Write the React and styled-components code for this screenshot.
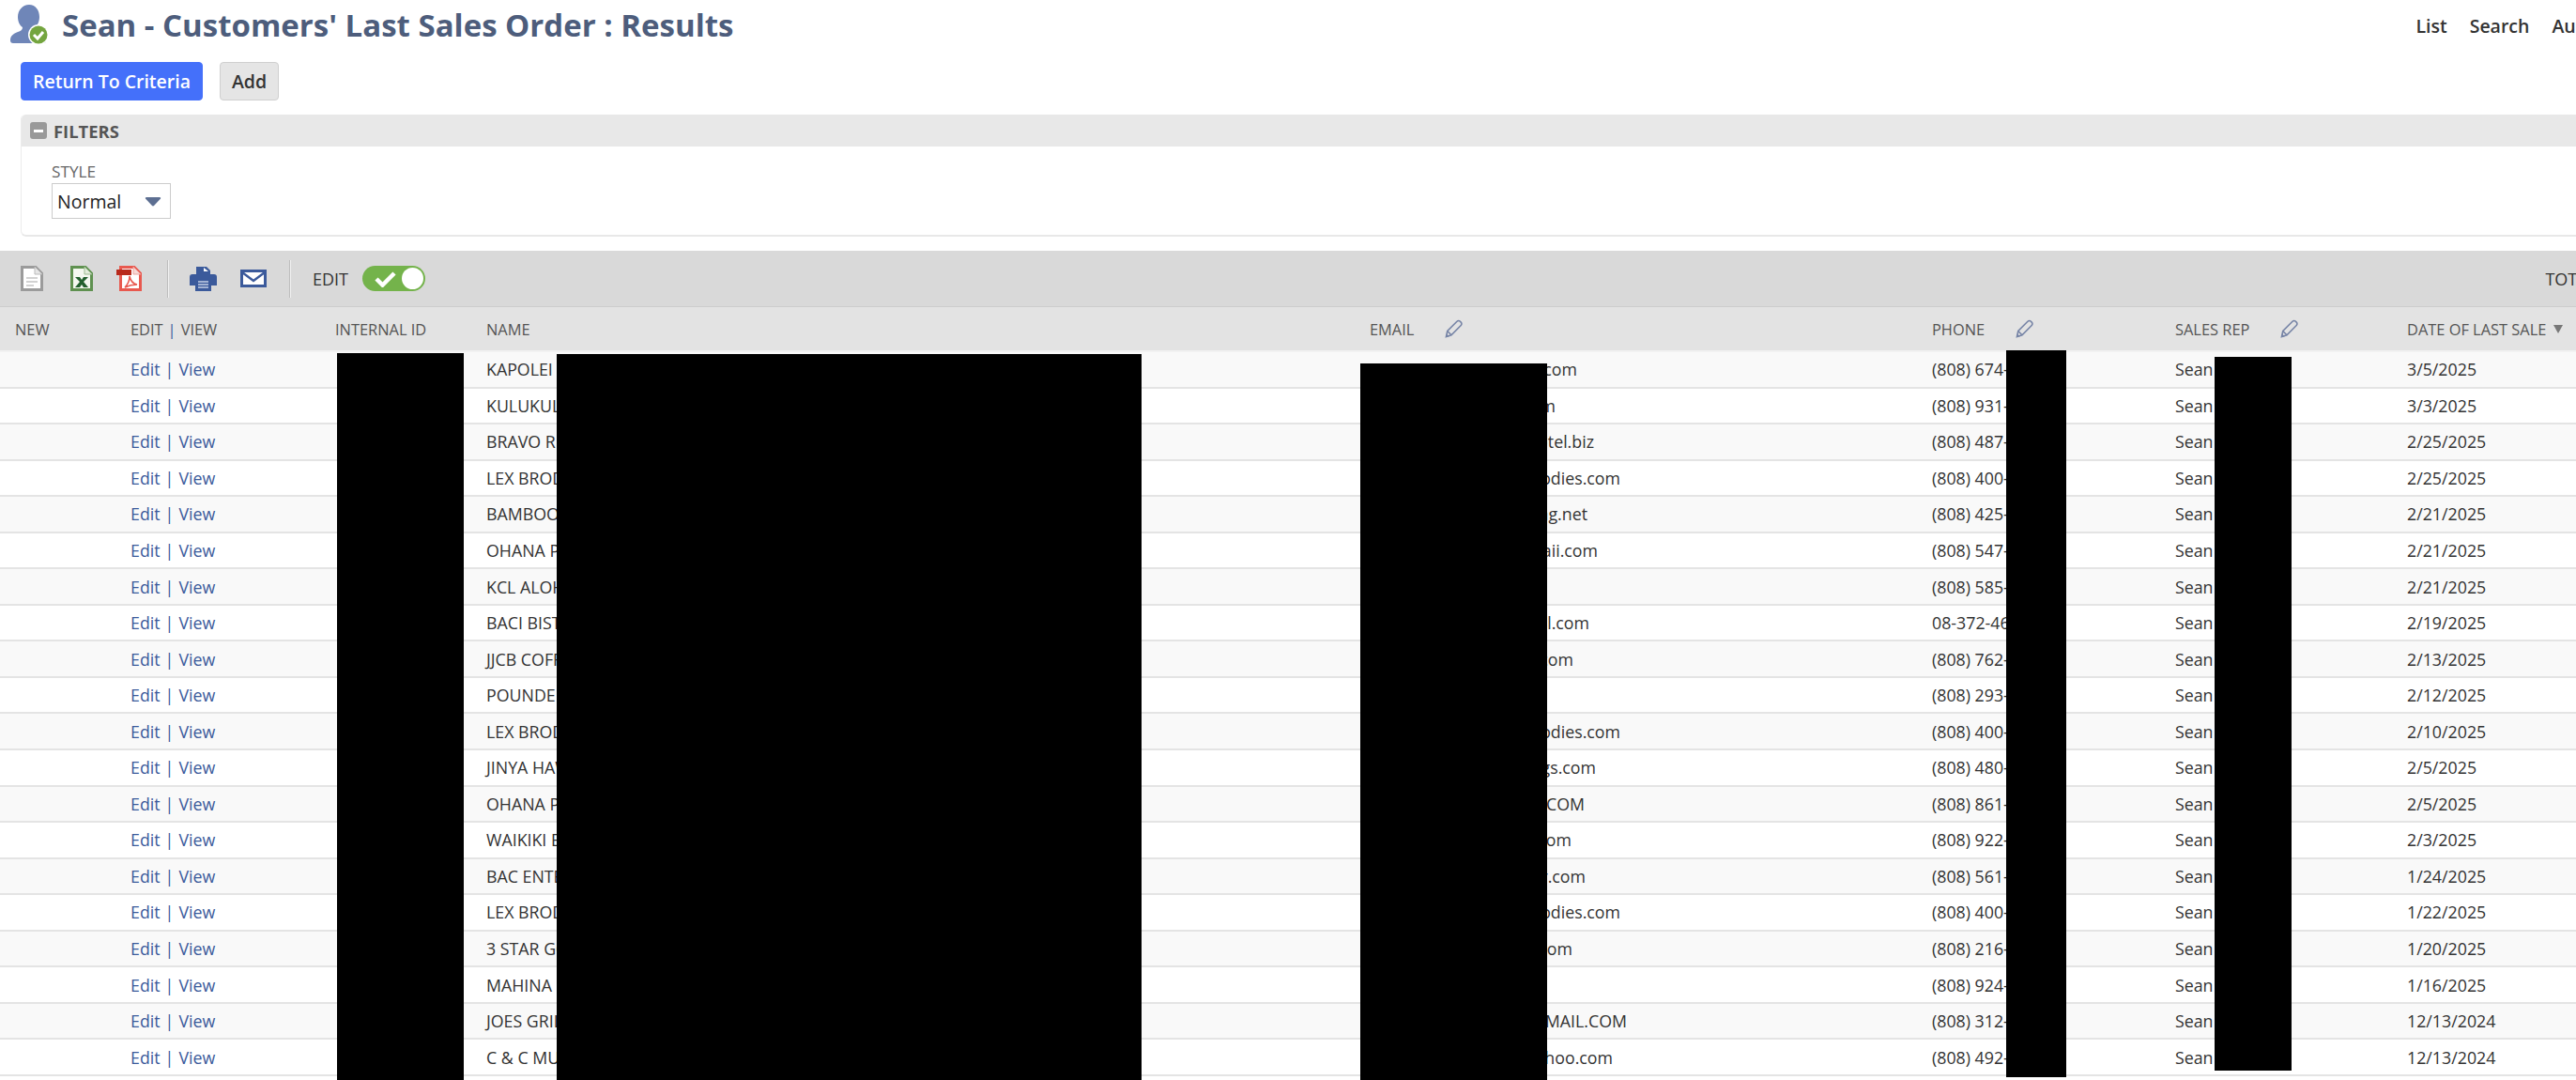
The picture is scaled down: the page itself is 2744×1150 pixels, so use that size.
import React from 'react';
import styled, { createGlobalStyle } from 'styled-components';

const GlobalStyle = createGlobalStyle`
  html, body {
    margin: 0;
    padding: 0;
    background: #fff;
    overflow: hidden;
  }
  body {
    font-family: "Open Sans", "Liberation Sans", sans-serif;
    color: #333;
  }
`;

const Page = styled('div')`
  position: relative;
  width: 2800px;
  height: 1150px;
  overflow: hidden;
`;

const TitleBar = styled('div')`
  display: flex;
  align-items: center;
  justify-content: space-between;
  height: 58px;
  padding: 0 31px 6px 10px;
  box-sizing: border-box;
`;

const TitleWrap = styled('div')`
  display: flex;
  align-items: center;
  gap: 12px;
`;

const Title = styled('h1')`
  margin: 0;
  font-size: 33px;
  font-weight: 700;
  color: #4d5d7c;
`;

const Nav = styled('div')`
  display: flex;
  gap: 24px;
  padding-top: 3px;
  font-size: 19.5px;
  font-weight: 600;
  color: #333;
`;

const ButtonRow = styled('div')`
  display: flex;
  gap: 18px;
  padding: 8px 0 15px 22px;
`;

const Button = styled('button')`
  height: 41px;
  padding: 0 12px;
  border-radius: 4px;
  border: 1px solid ${(p) => (p.$primary ? '#4470fa' : '#cfcfcf')};
  background: ${(p) => (p.$primary ? '#4470fa' : '#e5e5e5')};
  color: ${(p) => (p.$primary ? '#fff' : '#333')};
  font-family: inherit;
  font-size: 19.5px;
  font-weight: 600;
`;

const FilterPanel = styled('div')`
  margin-left: 22px;
  height: 130px;
  box-sizing: border-box;
  border-left: 1px solid #ececec;
  border-bottom: 2px solid #e8e8e8;
  border-radius: 5px 0 0 6px;
`;

const FilterHead = styled('div')`
  display: flex;
  align-items: center;
  gap: 7px;
  height: 34px;
  padding-left: 9px;
  background: #e8e8e8;
  border-radius: 5px 0 0 0;
  font-size: 18.4px;
  font-weight: 700;
  color: #555;
`;

const Collapse = styled('span')`
  display: flex;
  align-items: center;
  justify-content: center;
  width: 18px;
  height: 18px;
  border-radius: 3px;
  background: #999;
  &::after {
    content: '';
    width: 10px;
    height: 3px;
    background: #fff;
  }
`;

const FilterBody = styled('div')`
  padding: 17px 0 0 32px;
`;

const FieldLabel = styled('div')`
  font-size: 17.2px;
  line-height: 20px;
  color: #666;
`;

const SelectBox = styled('div')`
  display: flex;
  align-items: center;
  justify-content: space-between;
  box-sizing: border-box;
  width: 127px;
  height: 38px;
  margin-top: 2px;
  padding: 0 9px 0 5px;
  border: 1px solid #ccc;
  font-size: 19.5px;
  color: #222;
`;

const Toolbar = styled('div')`
  display: flex;
  align-items: center;
  box-sizing: border-box;
  height: 60px;
  margin-top: 15px;
  padding: 0 0 0 22px;
  background: #d9d9d9;
  border-bottom: 1px solid #cdcdcd;
`;

const Tool = styled('span')`
  display: flex;
  margin-right: ${(p) => p.$after}px;
`;

const ToolSep = styled('span')`
  box-sizing: border-box;
  width: 2px;
  height: 40px;
  margin-right: 22px;
  background: #f1f1f1;
  border-left: 1px solid #bdbdbd;
`;

const EditLabel = styled('span')`
  margin: 0 15px 0 1px;
  font-size: 18px;
  color: #333;
`;

const Toggle = styled('span')`
  display: flex;
  align-items: center;
  justify-content: space-between;
  box-sizing: border-box;
  width: 67px;
  height: 27px;
  padding: 0 2px 0 13px;
  border-radius: 14px;
  background: #74b34b;
`;

const Knob = styled('span')`
  width: 23px;
  height: 23px;
  border-radius: 50%;
  background: #fff;
`;

const Total = styled('span')`
  margin-left: auto;
  margin-right: 4px;
  font-size: 18px;
  color: #333;
`;

const COLUMNS = '123px 218px 161px 941px 599px 259px 247px 1fr';

const HeadRow = styled('div')`
  display: grid;
  grid-template-columns: ${COLUMNS};
  align-items: center;
  box-sizing: border-box;
  height: 48px;
  padding-left: 16px;
  background: #e3e3e3;
  border-bottom: 2px solid #f2f2f2;
  font-size: 16.4px;
  color: #555;
`;

const HeadCell = styled('div')`
  display: flex;
  align-items: center;
  gap: ${(p) => p.$gap || 0}px;
`;

const Bar = styled('span')`
  color: #3b5a9b;
  margin: 0 5px;
`;

const SortMark = styled('span')`
  width: 0;
  height: 0;
  margin-left: 8px;
  border-left: 5px solid transparent;
  border-right: 5px solid transparent;
  border-top: 9px solid #777;
`;

const Row = styled('div')`
  display: grid;
  grid-template-columns: ${COLUMNS};
  align-items: center;
  box-sizing: border-box;
  height: 38.55px;
  padding-left: 16px;
  background: ${(p) => (p.$odd ? '#f9f9f9' : '#fff')};
  border-bottom: 2px solid #e4e4e4;
  font-size: 17.8px;
  color: #333;
  white-space: nowrap;
  &:last-of-type {
    border-bottom: 0;
  }
`;

const Links = styled('div')`
  color: #3b5a9b;
`;

const EmailTail = styled('div')`
  width: ${(p) => p.$end - 1459}px;
  text-align: right;
`;

const Redaction = styled('div')`
  position: absolute;
  left: ${(p) => p.$x}px;
  top: ${(p) => p.$y}px;
  width: ${(p) => p.$w}px;
  height: ${(p) => p.$h}px;
  background: #000;
`;

const rows = [
  ['KAPOLEI', '.com', 1680, '(808) 674-', '3/5/2025'],
  ['KULUKUL', 'm', 1657, '(808) 931-', '3/3/2025'],
  ['BRAVO R', 'otel.biz', 1698, '(808) 487-', '2/25/2025'],
  ['LEX BROD', 'bodies.com', 1726, '(808) 400-', '2/25/2025'],
  ['BAMBOO', 'ng.net', 1691, '(808) 425-', '2/21/2025'],
  ['OHANA P', 'waii.com', 1702, '(808) 547-', '2/21/2025'],
  ['KCL ALOH', '', 1702, '(808) 585-', '2/21/2025'],
  ['BACI BIST', 'il.com', 1693, '08-372-46', '2/19/2025'],
  ['JJCB COFF', '.com', 1676, '(808) 762-', '2/13/2025'],
  ['POUNDE', '', 1702, '(808) 293-', '2/12/2025'],
  ['LEX BROD', 'bodies.com', 1726, '(808) 400-', '2/10/2025'],
  ['JINYA HAW', 'ngs.com', 1700, '(808) 480-', '2/5/2025'],
  ['OHANA P', '.COM', 1688, '(808) 861-', '2/5/2025'],
  ['WAIKIKI B', 'com', 1674, '(808) 922-', '2/3/2025'],
  ['BAC ENTE', 'r.com', 1689, '(808) 561-', '1/24/2025'],
  ['LEX BROD', 'bodies.com', 1726, '(808) 400-', '1/22/2025'],
  ['3 STAR GO', '.com', 1675, '(808) 216-', '1/20/2025'],
  ['MAHINA', '', 1702, '(808) 924-', '1/16/2025'],
  ['JOES GRIL', 'GMAIL.COM', 1733, '(808) 312-', '12/13/2024'],
  ['C & C MU', 'ahoo.com', 1718, '(808) 492-', '12/13/2024'],
];

const redactions = [
  { x: 359, y: 376, w: 135, h: 774 },
  { x: 593, y: 377, w: 623, h: 773 },
  { x: 1449, y: 387, w: 199, h: 763 },
  { x: 2137, y: 373, w: 64, h: 774 },
  { x: 2359, y: 380, w: 82, h: 760 },
];

const UserIcon = () => (
  <svg width="44" height="44" viewBox="0 0 44 44">
    <path fill="#6f86b8" d="M21 1c7 0 11 6 11 13 0 5-2 9-5 11 0 3 2 4 5 5 5 2 7 4 7 9 0 2-1 3-3 3H4c-2 0-3-1-3-3 0-5 3-7 8-9 3-1 5-2 5-5-3-2-5-6-5-11C9 7 14 1 21 1z" />
    <circle cx="31" cy="33" r="11" fill="#fff" />
    <circle cx="31" cy="33" r="9.5" fill="#74a53f" />
    <path d="M26 33l4 4 6-7" fill="none" stroke="#fff" strokeWidth="3" />
  </svg>
);

const DocIcon = () => (
  <svg width="24" height="27" viewBox="0 0 24 27">
    <path d="M1.5 1.5H16L22.5 8V25.5H1.5z" fill="#fff" stroke="#9b9b9b" strokeWidth="3" />
    <path d="M15 1v8h8" fill="#e6e6e6" stroke="#bbb" />
    <path d="M6 13h12M6 17h12M6 21h8" stroke="#c4c4c4" strokeWidth="1.5" />
  </svg>
);

const ExcelIcon = () => (
  <svg width="24" height="27" viewBox="0 0 24 27">
    <path d="M1.5 1.5H16L22.500 8V25.5H1.5z" fill="#f4f8f0" stroke="#5f9150" strokeWidth="3" />
    <path d="M15 1v8h8" fill="#e2ecdb" stroke="#9dbb91" />
    <path d="M5 12h5l2 3 2-3h5l-5 5 5 6h-5l-2-3-2 3H5l5-6z" fill="#23602e" />
  </svg>
);

const PdfIcon = () => (
  <svg width="27" height="27" viewBox="0 0 27 27">
    <path d="M4.500 1.500H19L25.500 8V25.500H4.500z" fill="#fff" stroke="#e8594f" strokeWidth="3" />
    <path d="M18 1v8h8" fill="#f6d9d6" stroke="#eda59f" />
    <rect x="0" y="4" width="16" height="6" fill="#b82a1c" />
    <path d="M9 23c3-3 5-8 5-12 1 5 3 8 8 9-5 0-9 1-13 3z" fill="none" stroke="#e8594f" strokeWidth="1.5" />
  </svg>
);

const PrintIcon = () => (
  <svg width="29" height="27" viewBox="0 0 29 27">
    <path d="M7 9V1h11l4 4v4z" fill="#3b5a9b" />
    <path d="M15 2v4h5" fill="#fff" />
    <path d="M3 9h23c2 0 3 1 3 3v9h-6V15H6v6H0v-9c0-2 1-3 3-3z" fill="#3b5a9b" />
    <rect x="6" y="14" width="17" height="13" fill="#3b5a9b" />
    <path d="M9 17h11M9 20h11M9 23h11" stroke="#c5d0e6" strokeWidth="1.6" />
  </svg>
);

const MailIcon = () => (
  <svg width="28" height="19" viewBox="0 0 28 19">
    <rect x="1.500" y="1.500" width="25" height="16" fill="#fff" stroke="#3b5a9b" strokeWidth="3" />
    <path d="M2 3l12 9 12-9" fill="none" stroke="#3b5a9b" strokeWidth="2.4" />
  </svg>
);

const CheckIcon = () => (
  <svg width="24" height="18" viewBox="0 0 24 18">
    <path d="M2 9l6.500 6.500L21 3" fill="none" stroke="#fff" strokeWidth="4.5" />
  </svg>
);

const PencilIcon = () => (
  <svg width="19" height="20" viewBox="0 0 19 20">
    <path d="M1.500 18.500l1.300-6L13 2.300c1-1 2.400-1 3.400 0l.8.8c1 1 1 2.400 0 3.400L7 16.800z" fill="none" stroke="#7684a6" strokeWidth="1.6" />
    <path d="M2.800 12.500l4.200 4.300" stroke="#7684a6" strokeWidth="1.6" />
    <path d="M1.200 19l.8-3.500 2.700 2.700z" fill="#7684a6" />
  </svg>
);

const SelectArrow = () => (
  <svg width="18" height="11" viewBox="0 0 18 11">
    <path d="M2 1h14c1 0 1.500.8 1 1.500l-7 7.500c-.5.5-1.500.5-2 0L1 2.500C.5 1.800 1 1 2 1z" fill="#5d6f92" />
  </svg>
);

export default function App() {
  return (
    <Page>
      <GlobalStyle />
      <TitleBar>
        <TitleWrap>
          <UserIcon />
          <Title>Sean - Customers' Last Sales Order : Results</Title>
        </TitleWrap>
        <Nav>
          <span>List</span>
          <span>Search</span>
          <span>Audit</span>
        </Nav>
      </TitleBar>

      <ButtonRow>
        <Button $primary>Return To Criteria</Button>
        <Button>Add</Button>
      </ButtonRow>

      <FilterPanel>
        <FilterHead>
          <Collapse />
          FILTERS
        </FilterHead>
        <FilterBody>
          <FieldLabel>STYLE</FieldLabel>
          <SelectBox>
            Normal
            <SelectArrow />
          </SelectBox>
        </FilterBody>
      </FilterPanel>

      <Toolbar>
        <Tool $after={29}><DocIcon /></Tool>
        <Tool $after={25}><ExcelIcon /></Tool>
        <Tool $after={27}><PdfIcon /></Tool>
        <ToolSep />
        <Tool $after={25}><PrintIcon /></Tool>
        <Tool $after={24}><MailIcon /></Tool>
        <ToolSep />
        <EditLabel>EDIT</EditLabel>
        <Toggle>
          <CheckIcon />
          <Knob />
        </Toggle>
        <Total>TOTAL: 20</Total>
      </Toolbar>

      <HeadRow>
        <HeadCell>NEW</HeadCell>
        <HeadCell>EDIT<Bar>|</Bar>VIEW</HeadCell>
        <HeadCell>INTERNAL ID</HeadCell>
        <HeadCell>NAME</HeadCell>
        <HeadCell $gap={33}>EMAIL <PencilIcon /></HeadCell>
        <HeadCell $gap={33}>PHONE <PencilIcon /></HeadCell>
        <HeadCell $gap={33}>SALES REP <PencilIcon /></HeadCell>
        <HeadCell>DATE OF LAST SALE<SortMark /></HeadCell>
      </HeadRow>

      {rows.map(([name, email, end, phone, date], i) => (
        <Row key={i} $odd={i % 2 === 0}>
          <div />
          <Links>Edit<Bar>|</Bar>View</Links>
          <div />
          <div>{name}</div>
          <EmailTail $end={end}>{email}</EmailTail>
          <div>{phone}</div>
          <div>Sean</div>
          <div>{date}</div>
        </Row>
      ))}

      {redactions.map((r) => (
        <Redaction key={r.x} $x={r.x} $y={r.y} $w={r.w} $h={r.h} />
      ))}
    </Page>
  );
}
